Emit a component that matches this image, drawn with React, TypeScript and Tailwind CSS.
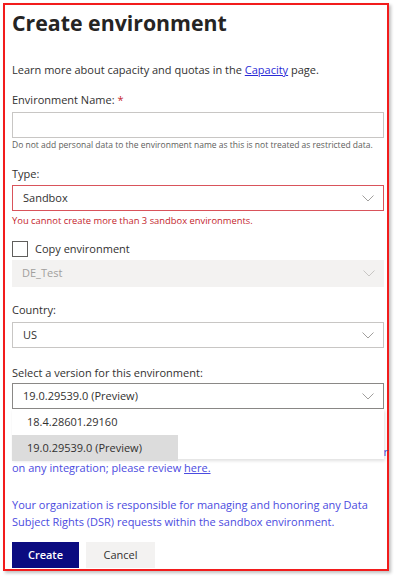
import React from 'react';

const font = { fontFamily: '"Open Sans", "Noto Sans", sans-serif' };

const Chevron: React.FC<{ muted?: boolean }> = ({ muted }) => (
  <svg width="12" height="7" viewBox="0 0 12 7" className="shrink-0">
    <path d="M0.5 0.5 L6 6 L11.5 0.5" fill="none" stroke={muted ? '#c8c6c4' : '#a19f9d'} strokeWidth="1" />
  </svg>
);

const SelectBox: React.FC<{ value: string; cls: string; textCls?: string; muted?: boolean }> = ({ value, cls, textCls, muted }) => (
  <div className={`flex items-center justify-between h-[26px] pl-[10px] pr-[9px] ${cls}`}>
    <span className={`text-[11px] ${textCls || 'text-[#323130]'}`}>{value}</span>
    <Chevron muted={muted} />
  </div>
);

export default function App() {
  return (
    <div className="w-[395px] h-[576px] bg-white overflow-hidden" style={font}>
      <div className="relative ml-[3px] mt-[3px] w-[386px] h-[568px] border-2 border-[#f21c1c] shadow-[2px_2px_3px_rgba(0,0,0,0.25)] pl-[7px] pr-[3px]">
        <h1 className="mt-[4px] text-[21.3px] leading-[28px] font-bold text-[#252423]">Create environment</h1>

        <p className="mt-[25px] text-[11px] leading-[16px] text-[#323130]">
          Learn more about capacity and quotas in the <span className="text-[#2b2bd6] underline">Capacity</span> page.
        </p>

        <div className="mt-[14px] text-[11px] leading-[16px] text-[#323130]">
          Environment Name: <span className="text-[#c4262e]">*</span>
        </div>
        <div className="mt-[4px] h-[26px] border border-[#c8c6c4] bg-white" />
        <div className="mt-[1px] text-[8.5px] leading-[12px] text-[#605e5c] whitespace-nowrap">
          Do not add personal data to the environment name as this is not treated as restricted data.
        </div>

        <div className="mt-[15px] text-[11px] leading-[16px] text-[#323130]">Type:</div>
        <div className="mt-[3px]">
          <SelectBox value="Sandbox" cls="border border-[#d9535b] bg-white" />
        </div>
        <div className="mt-[3px] text-[9.4px] leading-[14px] text-[#c4262e]">You cannot create more than 3 sandbox environments.</div>

        <div className="mt-[13px] flex items-center gap-[7px] h-[16px]">
          <div className="w-[16px] h-[16px] border border-[#605e5c] bg-white" />
          <span className="text-[11px] text-[#323130]">Copy environment</span>
        </div>
        <div className="mt-[3px]">
          <SelectBox value="DE_Test" cls="h-[27px] bg-[#f3f2f1]" textCls="text-[#a19f9d]" muted />
        </div>

        <div className="mt-[15px] text-[11px] leading-[16px] text-[#323130]">Country:</div>
        <div className="mt-[4px]">
          <SelectBox value="US" cls="border border-[#c8c6c4] bg-white" />
        </div>

        <div className="mt-[17px] text-[11px] leading-[16px] text-[#323130]">Select a version for this environment:</div>
        <div className="mt-[2px]">
          <SelectBox value="19.0.29539.0 (Preview)" cls="border border-[#8a8886] bg-white" />
        </div>

        <div className="mt-[35px] text-[11px] leading-[16px] text-[#4b4be0]">
          <div className="flex justify-end -mr-[4px]">ur</div>
          <div>
            on any integration; please review <span className="underline">here.</span>
          </div>
        </div>

        <p className="mt-[20px] text-[11px] leading-[17px] text-[#4b4be0]">
          Your organization is responsible for managing and honoring any Data Subject Rights (DSR) requests within the sandbox environment.
        </p>

        <div className="mt-[12px] flex gap-[7px]">
          <button className="w-[67px] h-[26px] bg-[#0b0b80] text-white text-[11px] font-semibold">Create</button>
          <button className="w-[69px] h-[26px] bg-[#f3f2f1] text-[#323130] text-[11px]">Cancel</button>
        </div>

        <div className="absolute left-[7px] top-[404px] w-[372px] h-[50px] bg-white shadow-[1px_2px_3px_rgba(0,0,0,0.12)]">
          <div className="h-[26px] flex items-center pl-[15px] text-[11px] text-[#323130]">18.4.28601.29160</div>
          <div className="w-[166px] h-[26px] flex items-center pl-[15px] bg-[#dcdcdc] text-[11px] text-[#323130]">19.0.29539.0 (Preview)</div>
        </div>
      </div>
    </div>
  );
}
